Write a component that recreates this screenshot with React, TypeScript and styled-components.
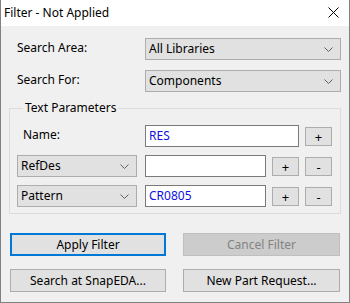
import React from "react";
import styled, { createGlobalStyle } from "styled-components";

const GlobalStyle = createGlobalStyle`
  html, body {
    margin: 0;
    padding: 0;
    background: #ffffff;
  }
  * {
    box-sizing: border-box;
  }
`;

const FONT = `"Noto Sans", "DejaVu Sans", sans-serif`;

function Chevron() {
  return (
    <svg width="9" height="5" viewBox="0 0 9 5">
      <path d="M0.5 0.5 L4.5 4.5 L8.5 0.5" fill="none" stroke="#606060" strokeWidth="1" />
    </svg>
  );
}

function CloseIcon() {
  return (
    <svg width="11" height="11" viewBox="0 0 11 11">
      <path d="M0.5 0.5 L10.5 10.5 M10.5 0.5 L0.5 10.5" stroke="#000" strokeWidth="1" />
    </svg>
  );
}

interface ComboProps {
  value: string;
  width: number;
}

function Combo(props: ComboProps) {
  const { value, width } = props;
  return (
    <StyledCombo $width={width}>
      <span>{value}</span>
      <Chevron />
    </StyledCombo>
  );
}

export default function App() {
  return (
    <>
      <GlobalStyle />
      <StyledWindow>
        <StyledTitleBar>
          <StyledTitle>Filter - Not Applied</StyledTitle>
          <StyledClose>
            <CloseIcon />
          </StyledClose>
        </StyledTitleBar>
        <StyledBody>
          <StyledFieldRow>
            <StyledLabel>Search Area:</StyledLabel>
            <Combo value="All Libraries" width={196} />
          </StyledFieldRow>
          <StyledFieldRow>
            <StyledLabel>Search For:</StyledLabel>
            <Combo value="Components" width={196} />
          </StyledFieldRow>

          <StyledGroup>
            <StyledLegend>Text Parameters</StyledLegend>
            <StyledParamRow>
              <StyledParamLabel>Name:</StyledParamLabel>
              <StyledInput $width={154}>RES</StyledInput>
              <StyledSmallButton>+</StyledSmallButton>
            </StyledParamRow>
            <StyledParamRow>
              <Combo value="RefDes" width={120} />
              <StyledInput $width={121}></StyledInput>
              <StyledSmallButton>+</StyledSmallButton>
              <StyledSmallButton>-</StyledSmallButton>
            </StyledParamRow>
            <StyledParamRow>
              <Combo value="Pattern" width={120} />
              <StyledInput $width={121}>CR0805</StyledInput>
              <StyledSmallButton>+</StyledSmallButton>
              <StyledSmallButton>-</StyledSmallButton>
            </StyledParamRow>
          </StyledGroup>

          <StyledButtonGrid>
            <StyledButton $focused>Apply Filter</StyledButton>
            <StyledButton $disabled>Cancel Filter</StyledButton>
            <StyledButton>Search at SnapEDA...</StyledButton>
            <StyledButton>New Part Request...</StyledButton>
          </StyledButtonGrid>
        </StyledBody>
      </StyledWindow>
    </>
  );
}

const StyledWindow = styled.div`
  width: 350px;
  height: 303px;
  display: flex;
  flex-direction: column;
  background: #f0f0f0;
  border: 1px solid #818181;
  border-top: none;
  font-family: ${FONT};
  font-size: 12px;
  color: #000;
`;

const StyledTitleBar = styled.div`
  height: 26px;
  display: flex;
  align-items: center;
  justify-content: space-between;
  padding: 0 10px 1px 3px;
  background: #ffffff;
`;

const StyledTitle = styled.span`
  font-size: 12px;
  line-height: 16px;
`;

const StyledClose = styled.span`
  display: flex;
  align-items: center;
`;

const StyledBody = styled.div`
  display: flex;
  flex-direction: column;
  padding: 12px 0 0 8px;
`;

const StyledFieldRow = styled.div`
  display: grid;
  grid-template-columns: 136px 196px;
  align-items: center;
  height: 22px;
  margin-bottom: 10px;

  &:nth-of-type(2) {
    margin-bottom: 0;
  }
`;

const StyledLabel = styled.span`
  padding-left: 8px;
  line-height: 16px;
  margin-top: -2px;
`;

const StyledCombo = styled.div<{ $width: number }>`
  width: ${(p) => p.$width}px;
  height: 22px;
  display: flex;
  align-items: center;
  justify-content: space-between;
  padding: 0 7px 0 3px;
  background: #e1e1e1;
  border: 1px solid #adadad;
  line-height: 16px;

  svg {
    flex-shrink: 0;
  }
`;

const StyledGroup = styled.fieldset`
  width: 332px;
  margin: 8px 0 0 0;
  padding: 9px 0 6px 7px;
  border: 1px solid #dcdcdc;
  display: flex;
  flex-direction: column;
  gap: 8px;
  min-width: 0;
`;

const StyledLegend = styled.legend`
  margin-left: 6px;
  padding: 0 2px;
  font-size: 12px;
  line-height: 16px;
`;

const StyledParamRow = styled.div`
  display: flex;
  align-items: center;
  gap: 6px;
  height: 22px;

  & > :first-child {
    margin-right: 2px;
  }
`;

const StyledParamLabel = styled.span`
  width: 120px;
  padding-left: 6px;
  line-height: 16px;
  margin-top: -2px;
`;

const StyledInput = styled.div<{ $width: number }>`
  width: ${(p) => p.$width}px;
  height: 22px;
  display: flex;
  align-items: center;
  padding: 0 3px;
  background: #ffffff;
  border: 1px solid #7a7a7a;
  color: #1010e0;
  line-height: 16px;
`;

const StyledSmallButton = styled.div`
  width: 27px;
  height: 19px;
  display: flex;
  align-items: center;
  justify-content: center;
  background: #e1e1e1;
  border: 1px solid #adadad;
  font-size: 13px;
  line-height: 16px;
  margin-top: 1px;
`;

const StyledButtonGrid = styled.div`
  display: grid;
  grid-template-columns: 156px 157px;
  column-gap: 17px;
  row-gap: 13px;
  margin: 19px 0 0 1px;
`;

const StyledButton = styled.div<{ $focused?: boolean; $disabled?: boolean }>`
  height: 23px;
  display: flex;
  align-items: center;
  justify-content: center;
  background: ${(p) => (p.$disabled ? "#cccccc" : "#e1e1e1")};
  border: ${(p) =>
    p.$focused ? "2px solid #0078d7" : p.$disabled ? "1px solid #bfbfbf" : "1px solid #adadad"};
  color: ${(p) => (p.$disabled ? "#838383" : "#000")};
  line-height: 16px;
`;
